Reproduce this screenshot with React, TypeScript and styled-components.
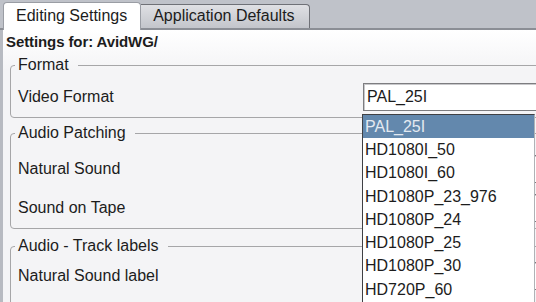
import styled, { createGlobalStyle } from 'styled-components';

const formats = [
	'PAL_25I',
	'HD1080I_50',
	'HD1080I_60',
	'HD1080P_23_976',
	'HD1080P_24',
	'HD1080P_25',
	'HD1080P_30',
	'HD720P_60',
];

function App() {
	return (
		<>
			<GlobalStyle />
			<Viewport>
				<Window>
					<TabStrip>
						<Tab $active>Editing Settings</Tab>
						<Tab>Application Defaults</Tab>
					</TabStrip>
					<Panel>
						<Heading>Settings for: AvidWG/</Heading>

						<Group $top={9} $bottom={6}>
							<Legend>Format</Legend>
							<Row>
								<Label>Video Format</Label>
								<ComboWrap>
									<Combo>PAL_25I</Combo>
									<Popup>
										{formats.map((f, i) => (
											<Item key={f} $selected={i === 0}>
												{f}
											</Item>
										))}
									</Popup>
								</ComboWrap>
							</Row>
						</Group>

						<Group $mt={6} $top={13} $bottom={6} $gap={11}>
							<Legend>Audio Patching</Legend>
							<Row>
								<Label>Natural Sound</Label>
								<Combo />
							</Row>
							<Row>
								<Label>Sound on Tape</Label>
								<Combo />
							</Row>
						</Group>

						<Group $mt={8} $top={7} $bottom={20}>
							<Legend>Audio - Track labels</Legend>
							<Row>
								<Label>Natural Sound label</Label>
								<Combo />
							</Row>
						</Group>
					</Panel>
				</Window>
			</Viewport>
		</>
	);
}

const GlobalStyle = createGlobalStyle`
	html, body {
		margin: 0;
		padding: 0;
		overflow: hidden;
		background: #f4f4f6;
	}
	body {
		font-family: 'Liberation Sans', Arial, sans-serif;
		font-size: 16px;
		color: #1c1c1c;
	}
`;

const Viewport = styled.div`
	width: 100vw;
	height: 100vh;
	overflow: hidden;
`;

const Window = styled.div`
	width: 720px;
	height: 100%;
	display: flex;
	flex-direction: column;
`;

const TabStrip = styled.div`
	display: flex;
	align-items: flex-start;
	height: 28px;
	padding-left: 3px;
	background: #bfc2c9;
	border-bottom: 2px solid #8b8e95;
	flex-shrink: 0;
`;

const Tab = styled.div<{ $active?: boolean }>`
	box-sizing: border-box;
	display: flex;
	align-items: center;
	white-space: nowrap;
	position: relative;
	z-index: ${(p) => (p.$active ? 1 : 0)};
	margin-top: ${(p) => (p.$active ? '2px' : '4px')};
	height: ${(p) => (p.$active ? '28px' : '24px')};
	padding: ${(p) => (p.$active ? '0 13px 1px 12px' : '0 14px 1px 12px')};
	background: ${(p) =>
		p.$active ? '#ffffff' : 'linear-gradient(#dfe0e4, #c3c5cb)'};
	border: 1px solid ${(p) => (p.$active ? '#9a9da4' : '#6f7177')};
	border-bottom: none;
	border-radius: ${(p) => (p.$active ? '4px 4px 0 0' : '0 4px 0 0')};
	${(p) => !p.$active && 'border-left: none;'}
`;

const Panel = styled.div`
	flex: 1;
	min-height: 0;
	border-left: 3px solid #b7bac1;
	background: linear-gradient(#ffffff 0px, #f4f4f6 40px);
	padding: 3px 0 0 0;
`;

const Heading = styled.div`
	font-weight: bold;
	font-size: 15px;
	line-height: 18px;
	padding-left: 3px;
	letter-spacing: -0.1px;
`;

const Group = styled.fieldset<{
	$mt?: number;
	$top: number;
	$bottom: number;
	$gap?: number;
}>`
	margin: ${(p) => p.$mt ?? 5}px 0 0 7px;
	padding: ${(p) => p.$top}px 0 ${(p) => p.$bottom}px 4px;
	border: 1px solid #a6a6a8;
	border-radius: 4px;
	display: flex;
	flex-direction: column;
	gap: ${(p) => p.$gap ?? 0}px;
	min-width: 0;
`;

const Legend = styled.legend`
	padding: 0 9px 0 3px;
	line-height: 18px;
	font-size: 16px;
`;

const Row = styled.div`
	display: grid;
	grid-template-columns: 345px 260px;
	align-items: center;
	height: 28px;
	padding-left: 3px;
`;

const Label = styled.span`
	white-space: nowrap;
`;

const ComboWrap = styled.div`
	position: relative;
	height: 28px;
`;

const Combo = styled.div`
	box-sizing: border-box;
	height: 28px;
	display: flex;
	align-items: center;
	padding-left: 3px;
	background: #ffffff;
	border: 1px solid #7d7d80;
	box-shadow: inset 1px 1px 0 #c8c8cb;
`;

const Popup = styled.div`
	position: absolute;
	z-index: 5;
	top: 31px;
	left: -1px;
	width: 173px;
	height: 220px;
	box-sizing: border-box;
	background: #ffffff;
	border-top: 1px solid #3f4044;
	border-left: 1px solid #3f4044;
	border-right: 1px solid #b0b2b6;
`;

const Item = styled.div<{ $selected?: boolean }>`
	height: 23.3px;
	display: flex;
	align-items: center;
	padding-left: 2px;
	white-space: nowrap;
	background: ${(p) => (p.$selected ? '#6388ad' : 'transparent')};
	color: ${(p) => (p.$selected ? '#e4eaf1' : '#1c1c1c')};
`;

export default App;
